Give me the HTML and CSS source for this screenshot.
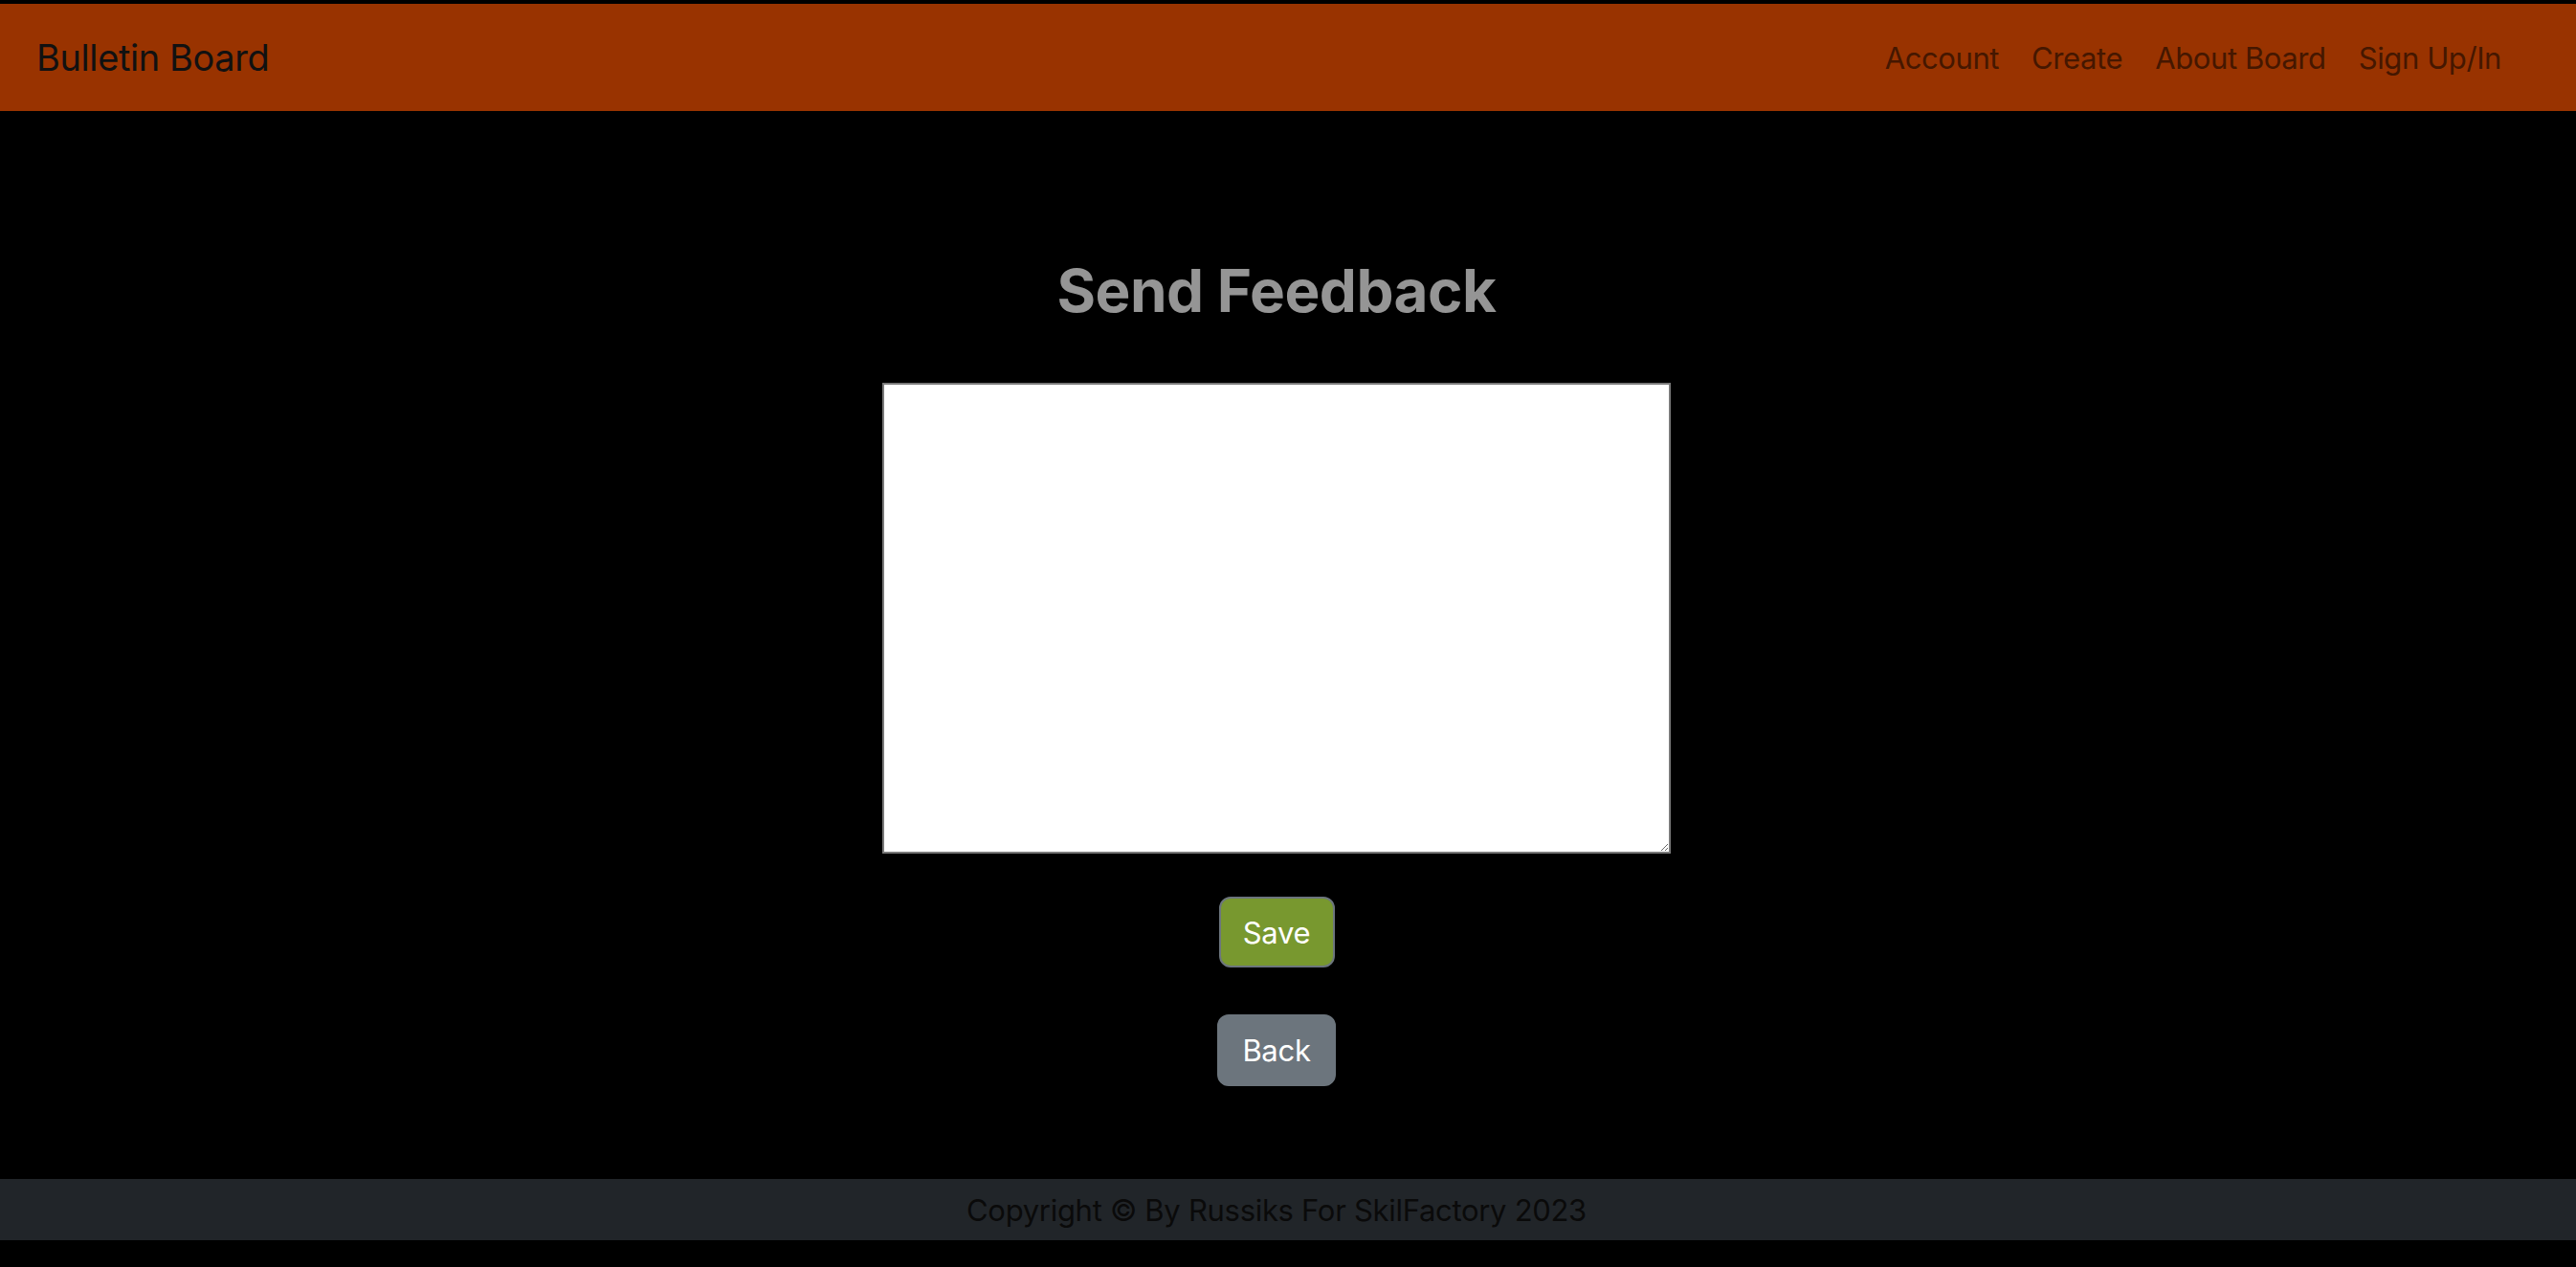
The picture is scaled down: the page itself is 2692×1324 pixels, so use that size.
FILE: index.html
```html
<!DOCTYPE html>
<html lang="en">
<head>
<meta charset="utf-8">
<title>Send Feedback</title>
<link rel="stylesheet" href="styles.css">
</head>
<body>
<header class="topbar">
  <a class="brand" href="#">Bulletin Board</a>
  <nav class="nav">
    <a class="nav-link" href="#">Account</a>
    <a class="nav-link" href="#">Create</a>
    <a class="nav-link" href="#">About Board</a>
    <a class="nav-link" href="#">Sign Up/In</a>
  </nav>
</header>
<main class="content">
  <h2 class="title">Send Feedback</h2>
  <form class="feedback-form">
    <textarea class="feedback-text"></textarea>
    <button type="button" class="btn btn-save">Save</button>
  </form>
  <a class="btn btn-back" href="#">Back</a>
</main>
<footer class="footer">
  <p class="copyright">Copyright © By Russiks For SkilFactory 2023</p>
</footer>
</body>
</html>
```

FILE: styles.css
```css
html, body {
  margin: 0;
  padding: 0;
  background: #000;
}
body {
  font-family: Inter, "Noto Sans", "Liberation Sans", sans-serif;
  padding-top: 4px;
  min-height: 1320px;
}
.topbar {
  height: 112px;
  background: #993300;
  display: flex;
  align-items: center;
  justify-content: space-between;
  padding: 0 78px 0 38px;
  box-sizing: border-box;
}
.brand {
  font-size: 38px;
  color: #111;
  text-decoration: none;
  letter-spacing: -0.4px;
}
.nav {
  display: flex;
  gap: 34px;
}
.nav-link {
  font-size: 31px;
  color: rgb(69, 23, 0);
  text-decoration: none;
  letter-spacing: -0.4px;
}
.content {
  display: flex;
  flex-direction: column;
  align-items: center;
  padding: 0 24px 0 0;
}
.title {
  margin: 150px 0 0;
  font-size: 62px;
  font-weight: 700;
  line-height: 76px;
  color: #959595;
  letter-spacing: -0.5px;
}
.feedback-form {
  display: flex;
  flex-direction: column;
  align-items: center;
}
.feedback-text {
  margin-top: 58px;
  width: 824px;
  height: 492px;
  box-sizing: border-box;
  border: 2px solid #7a7a7a;
  background: #fff;
  resize: both;
  padding: 4px;
}
.btn {
  display: flex;
  align-items: center;
  justify-content: center;
  box-sizing: border-box;
  border-radius: 12px;
  border: 2px solid #6c757d;
  font-family: inherit;
  font-size: 31px;
  color: #fff;
  text-decoration: none;
  letter-spacing: -0.3px;
}
.btn-save {
  margin-top: 45px;
  width: 121px;
  height: 74px;
  background: #78982f;
}
.btn-back {
  margin-top: 49px;
  width: 124px;
  height: 75px;
  background: #6c757d;
}
.footer {
  margin-top: 97px;
  height: 64px;
  background: #212529;
  display: flex;
  align-items: center;
  justify-content: center;
  padding-right: 24px;
}
.copyright {
  margin: 0;
  font-size: 31px;
  color: #0a0a0a;
  letter-spacing: -0.3px;
}
```
